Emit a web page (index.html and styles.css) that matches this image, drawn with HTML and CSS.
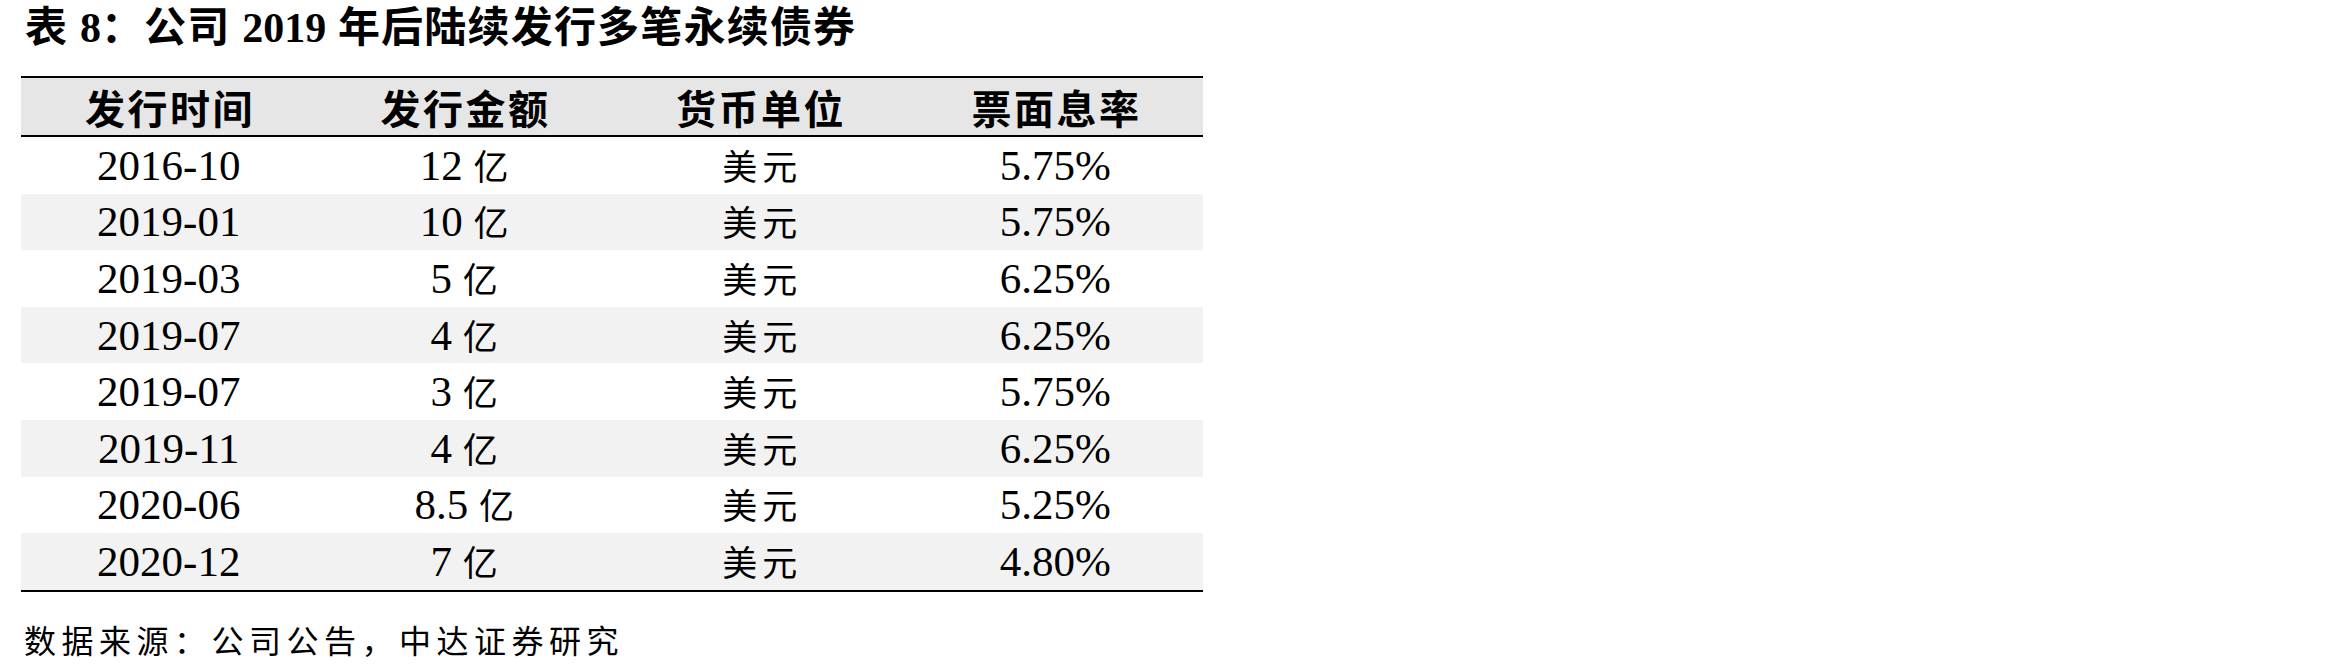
FILE: index.html
```html
<!DOCTYPE html>
<html lang="zh-CN">
<head>
<meta charset="utf-8">
<title>表 8：公司 2019 年后陆续发行多笔永续债券</title>
<link rel="stylesheet" href="styles.css">
</head>
<body>
<div class="page">
  <div class="title">表 <span class="num">8</span>：公司 <span class="num">2019</span> 年后陆续发行多笔永续债券</div>
  <table class="bonds">
    <thead>
      <tr><th>发行时间</th><th>发行金额</th><th>货币单位</th><th>票面息率</th></tr>
    </thead>
    <tbody>
      <tr><td>2016-10</td><td>12 <span class="zh">亿</span></td><td><span class="zh">美元</span></td><td>5.75%</td></tr>
      <tr><td>2019-01</td><td>10 <span class="zh">亿</span></td><td><span class="zh">美元</span></td><td>5.75%</td></tr>
      <tr><td>2019-03</td><td>5 <span class="zh">亿</span></td><td><span class="zh">美元</span></td><td>6.25%</td></tr>
      <tr><td>2019-07</td><td>4 <span class="zh">亿</span></td><td><span class="zh">美元</span></td><td>6.25%</td></tr>
      <tr><td>2019-07</td><td>3 <span class="zh">亿</span></td><td><span class="zh">美元</span></td><td>5.75%</td></tr>
      <tr><td>2019-11</td><td>4 <span class="zh">亿</span></td><td><span class="zh">美元</span></td><td>6.25%</td></tr>
      <tr><td>2020-06</td><td>8.5 <span class="zh">亿</span></td><td><span class="zh">美元</span></td><td>5.25%</td></tr>
      <tr><td>2020-12</td><td>7 <span class="zh">亿</span></td><td><span class="zh">美元</span></td><td>4.80%</td></tr>
    </tbody>
  </table>
  <p class="source">数据来源：公司公告，中达证券研究</p>
</div>
</body>
</html>
```

FILE: styles.css
```css
html, body {
  margin: 0;
  background: #ffffff;
  color: #000000;
}

.page {
  padding: 0 21px;
  width: 1182px;
}

.title {
  margin: 0 0 20px;
  padding-left: 4px;
  font-family: "Liberation Serif", "Noto Sans CJK SC", serif;
  font-weight: bold;
  font-size: 42px;
  line-height: 56px;
  letter-spacing: 1.2px;
  white-space: nowrap;
}

.title .num {
  font-family: "Liberation Serif", serif;
  font-weight: bold;
  font-size: 42px;
  letter-spacing: 0;
}

.bonds {
  width: 1182px;
  table-layout: fixed;
  border-collapse: separate;
  border-spacing: 0;
  border-top: 2px solid #000000;
  border-bottom: 2px solid #000000;
}

.bonds th {
  height: 57px;
  padding: 0;
  background: #e7e6e6;
  border-bottom: 2px solid #000000;
  font-family: "Noto Sans CJK SC", sans-serif;
  font-weight: bold;
  font-size: 40px;
  line-height: 1;
  letter-spacing: 2.5px;
  text-indent: 2.5px;
  text-align: center;
  vertical-align: middle;
}

.bonds td {
  height: 56.6px;
  padding: 0;
  text-align: center;
  vertical-align: middle;
  font-family: "Liberation Serif", "Noto Sans CJK SC", serif;
  font-size: 43px;
  line-height: 1;
  white-space: nowrap;
}

.bonds tbody tr:nth-child(even) td {
  background: #f2f2f2;
}

.zh {
  font-family: "Noto Sans CJK SC", sans-serif;
  font-size: 35px;
  letter-spacing: 5px;
  margin-right: -5px;
}

.source {
  margin: 27px 0 0;
  padding-left: 3px;
  font-family: "Noto Sans CJK SC", sans-serif;
  font-size: 32px;
  line-height: 40px;
  letter-spacing: 5.5px;
  white-space: nowrap;
}
```
